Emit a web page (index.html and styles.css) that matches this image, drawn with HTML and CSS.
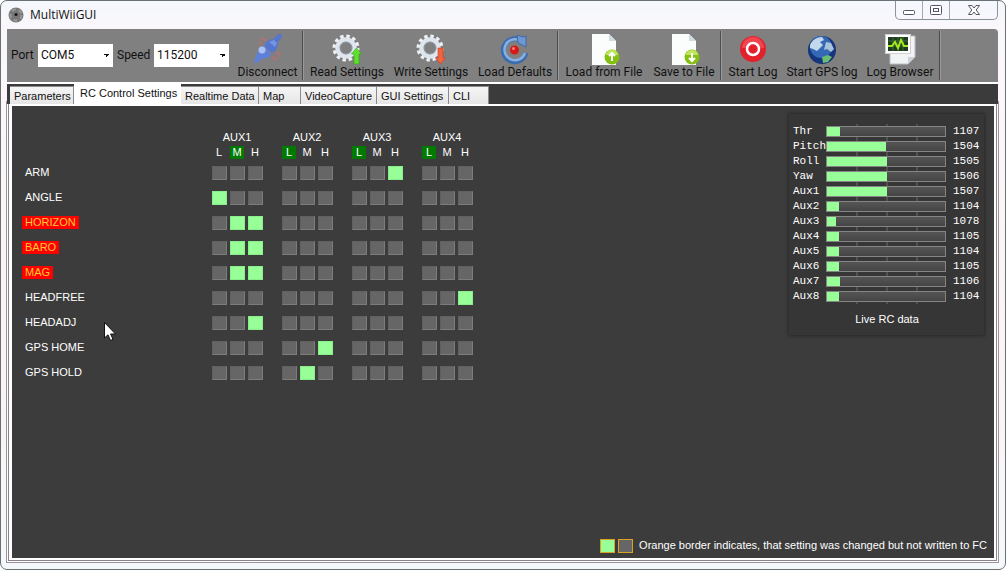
FILE: index.html
```html
<!DOCTYPE html>
<html lang="en">
<head>
<meta charset="utf-8">
<title>MultiWiiGUI</title>
<link rel="stylesheet" href="styles.css">
</head>
<body>
<div class="window">
  <header class="titlebar">
    <svg class="app-icon" viewBox="0 0 16 16"><circle cx="8" cy="8" r="7.500" fill="#777"/><circle cx="8" cy="8" r="5.500" fill="none" stroke="#999" stroke-width="2" stroke-dasharray="4 3"/><circle cx="8" cy="8" r="3" fill="#777"/><circle cx="8" cy="7.500" r="1.500" fill="#111"/></svg>
    <h1 class="title">MultiWiiGUI</h1>
    <div class="window-buttons">
      <button class="wb" aria-label="Minimize"><svg width="14" height="12" viewBox="0 0 14 12"><rect x="1.500" y="6.500" width="11" height="4" rx="1" fill="#fff" stroke="#556"/></svg></button>
      <button class="wb" aria-label="Maximize"><svg width="14" height="12" viewBox="0 0 14 12"><rect x="1.500" y="1.500" width="11" height="9" rx="1" fill="#fff" stroke="#556"/><rect x="4.500" y="4.500" width="5" height="3" fill="#fff" stroke="#556"/></svg></button>
      <button class="wb wb-close" aria-label="Close"><svg width="14" height="12" viewBox="0 0 14 12"><path d="M1.500 1.500h3.500l2 2.500 2-2.500h3.500L9.200 6l3.300 4.500H9L7 8l-2 2.500H1.500L4.800 6z" fill="#fff" stroke="#556"/></svg></button>
    </div>
  </header>

  <div class="toolbar" role="toolbar">
    <label class="field-label" for="port">Port</label>
    <select class="combo" id="port"><option>COM5</option></select>
    <label class="field-label" for="speed">Speed</label>
    <select class="combo" id="speed"><option>115200</option></select>
    <button class="tool w-69">
      <svg class="icon" viewBox="0 0 32 32"><g fill="none" stroke="#b07078" stroke-width="2" opacity=".8"><path d="M7 8l4-3 3 3M6 12l4-3M21 27l5-2M24 19l4 2-2 3M20 23l3 3"/></g><path d="M2 30c1-5 2-8 4-11 0-4 4-7 7-5l5 5c2 3 0 6-4 6-4 1-7 2-9 5z" fill="#6080d8"/><path d="M13 11c2-3 5-5 9-5l4-5 3 0 1 3-4 5c0 4-1 7-4 10-1 1-3 0-4-1l-5-4z" fill="#5475d0"/><path d="M17 9l5-2 3 3-2 4z" fill="#7595e2"/><circle cx="10" cy="17" r="3.500" fill="#a9c0f5"/></svg>
      <span>Disconnect</span></button>
    <span class="sep"></span>
    <button class="tool w-84">
      <svg class="icon" viewBox="0 0 32 32"><circle cx="15" cy="15" r="11.500" fill="none" stroke="#eef1f5" stroke-width="4" stroke-dasharray="3.300 2.721"/><circle cx="15" cy="15" r="8.500" fill="none" stroke="#dfe5ed" stroke-width="4.500"/><circle cx="15" cy="15" r="6" fill="none" stroke="#8e9cab"/><path d="M25.500 15l5 6h-2.500v10h-5V21h-2.500z" fill="#5fe02c" stroke="#2fa614" stroke-width=".6"/></svg>
      <span>Read Settings</span></button>
    <button class="tool w-84">
      <svg class="icon" viewBox="0 0 32 32"><circle cx="15" cy="15" r="11.500" fill="none" stroke="#eef1f5" stroke-width="4" stroke-dasharray="3.300 2.721"/><circle cx="15" cy="15" r="8.500" fill="none" stroke="#dfe5ed" stroke-width="4.500"/><circle cx="15" cy="15" r="6" fill="none" stroke="#8e9cab"/><path d="M25.500 31l5-6h-2.500V15h-5v10h-2.500z" fill="#f0653f" stroke="#d13b20" stroke-width=".6"/></svg>
      <span>Write Settings</span></button>
    <button class="tool w-84">
      <svg class="icon" viewBox="0 0 32 32"><path d="M27 20A11.500 11.500 0 1 1 21 7" fill="none" stroke="#3c6cad" stroke-width="5"/><path d="M26 20A10.500 10.500 0 1 1 20 7" fill="none" stroke="#88b0e2" stroke-width="2.500"/><path d="M18 2l6 2 3-1 0 11-8-4z" fill="#6c98d4" stroke="#3f69a4"/><circle cx="15.500" cy="17" r="4.500" fill="#d61818"/><circle cx="14.500" cy="15.500" r="1.500" fill="#ff8078"/></svg>
      <span>Load Defaults</span></button>
    <span class="sep"></span>
    <button class="tool w-88">
      <svg class="icon" viewBox="0 0 32 32"><path d="M4 1h17l7 7v24H4z" fill="#fbfcfc"/><path d="M21 1v7h7z" fill="#d4dbe0"/><circle cx="24" cy="24" r="7.500" fill="#84c010"/><path d="M18 22a6 5 0 0 1 12 0z" fill="#bfe65c"/><path d="M24 28v-7M21 23l3-3 3 3" fill="none" stroke="#fff" stroke-width="2"/></svg>
      <span>Load from File</span></button>
    <button class="tool w-72">
      <svg class="icon" viewBox="0 0 32 32"><path d="M4 1h17l7 7v24H4z" fill="#fbfcfc"/><path d="M21 1v7h7z" fill="#d4dbe0"/><circle cx="24" cy="24" r="7.500" fill="#84c010"/><path d="M18 22a6 5 0 0 1 12 0z" fill="#bfe65c"/><path d="M24 20v7M21 25l3 3 3-3" fill="none" stroke="#fff" stroke-width="2"/></svg>
      <span>Save to File</span></button>
    <span class="sep"></span>
    <button class="tool w-60">
      <svg class="icon" viewBox="0 0 32 32"><circle cx="16" cy="16" r="13" fill="#e3212d"/><path d="M5 15a11 11 0 0 1 22 0z" fill="#f0444e"/><circle cx="16" cy="16" r="6" fill="#e3212d" stroke="#fff" stroke-width="2.500"/></svg>
      <span>Start Log</span></button>
    <button class="tool w-78">
      <svg class="icon" viewBox="0 0 32 32"><circle cx="16" cy="17" r="14" fill="#16357c"/><circle cx="15" cy="14" r="11" fill="#3568b5"/><path d="M4 12c2-5 7-8 12-8l2 3-4 2 3 3-4 4-2 2-4-2-3-1z" fill="#c3d8ec"/><path d="M20 9l5 1 3 6-3 3-4-3-3 1z" fill="#a9c3da"/><path d="M16 24l6-2 4 2-4 5-5 1z" fill="#69bd71"/></svg>
      <span>Start GPS log</span></button>
    <button class="tool w-78">
      <svg class="icon" viewBox="0 0 32 32"><path d="M6 3h25v21l-7 7H6z" fill="#f2f3f5" stroke="#b9bdc3"/><path d="M24 31v-7h7z" fill="#cdd1d8"/><rect x="1.500" y="1.500" width="25" height="19" fill="#fff" stroke="#d0d0d0"/><rect x="4" y="4" width="20" height="14" fill="#1d3b1d"/><path d="M4 8h20M4 13h20M9 4v14M14 4v14M19 4v14" stroke="#3d6a3a" fill="none"/><path d="M4 13h4l3-4 3 6 3-8 3 6h4" fill="none" stroke="#a2e821" stroke-width="2"/></svg>
      <span>Log Browser</span></button>
    <span class="sep"></span>
  </div>

  <nav class="tabs" role="tablist">
    <button class="tab t-64" role="tab">Parameters</button>
    <button class="tab tab-active" role="tab" aria-selected="true">RC Control Settings</button>
    <button class="tab t-78" role="tab">Realtime Data</button>
    <button class="tab t-42" role="tab">Map</button>
    <button class="tab t-76" role="tab">VideoCapture</button>
    <button class="tab t-72" role="tab">GUI Settings</button>
    <button class="tab t-40" role="tab">CLI</button>
  </nav>

  <main class="page">
    <div class="columns">
      <table class="modes">
        <thead>
          <tr class="aux-row"><td></td><th colspan="3">AUX1</th><td></td><th colspan="3">AUX2</th><td></td><th colspan="3">AUX3</th><td></td><th colspan="3">AUX4</th></tr>
          <tr class="pos-row"><td class="name-col"></td><th>L</th><th><span class="on">M</span></th><th>H</th><td class="gap"></td><th><span class="on">L</span></th><th>M</th><th>H</th><td class="gap"></td><th><span class="on">L</span></th><th>M</th><th>H</th><td class="gap"></td><th><span class="on">L</span></th><th>M</th><th>H</th></tr>
        </thead>
        <tbody id="modes"></tbody>
      </table>
      <section class="live">
        <div class="channels" id="channels"></div>
        <h2 class="live-title">Live RC data</h2>
      </section>
    </div>
    <footer class="legend">
      <span class="swatch swatch-on"></span><span class="swatch"></span>
      <span class="legend-text">Orange border indicates, that setting was changed but not written to FC</span>
    </footer>
  </main>
  <svg class="cursor" width="12" height="19" viewBox="0 0 12 19"><path d="M.5.500v15.500l3.500-3.200 2.500 5.700 2.500-1.200-2.400-5.300h4.900z" fill="#fff" stroke="#111"/></svg>
</div>
<script src="app.js"></script>
</body>
</html>
```
FILE: styles.css
```css
* { box-sizing: border-box; }
body {
  margin: 0;
  font: 11px/15px "Liberation Sans", Arial, sans-serif;
  background: #fff;
}
button { font: inherit; border: 0; padding: 0; margin: 0; background: none; color: inherit; }
.window {
  position: relative;
  display: flex;
  flex-direction: column;
  min-height: 100vh;
  padding: 0 7px 9px 6px;
  border: 1px solid #6b7070;
  border-radius: 7px;
  background: linear-gradient(#f4f7fd, #faf7fb 30px, #fbf3f5 60%, #f5f8fa);
}
.titlebar { display: flex; align-items: center; height: 28px; padding-left: 1px; }
.app-icon { width: 16px; height: 16px; }
.title { flex: 1; margin: 0 0 0 6px; font: 12px/16px "Open Sans", sans-serif; color: #111; }
.window-buttons {
  display: flex;
  align-self: flex-start;
  height: 19px;
  border: 1px solid #8b919b;
  border-top: 0;
  border-radius: 0 0 5px 5px;
}
.wb { display: flex; align-items: center; justify-content: center; width: 27px; border-right: 1px solid #a4a9b2; }
.wb-close { width: 47px; border-right: 0; }

.toolbar {
  position: relative;
  z-index: 1;
  display: flex;
  align-items: center;
  height: 55px;
  padding-left: 4px;
  border-bottom: 2px solid #fff;
  border-radius: 0 4px 0 0;
  background: #808080;
  font: 12px/15px Roboto, "Open Sans", sans-serif;
  color: #111;
}
.field-label { width: 27px; }
.combo + .field-label { width: 37px; }
.combo {
  width: 75px;
  height: 23px;
  margin-right: 4px;
  padding: 0 3px;
  border: 0;
  border-radius: 0;
  appearance: none;
  font: inherit;
  color: #111;
  background-color: #fff;
  background-image: linear-gradient(45deg, transparent 50%, #111 50%), linear-gradient(315deg, transparent 50%, #111 50%);
  background-position: right 6px center, right 3px center;
  background-size: 3px 3px;
  background-repeat: no-repeat;
}
.tool { display: flex; flex-direction: column; align-items: center; flex: none; padding-top: 2px; white-space: nowrap; }
.icon { width: 32px; height: 32px; }
.sep { flex: none; width: 2px; height: 49px; margin-right: 1px; background: #4d4d4d; border-right: 1px solid #999; }
.w-60 { width: 60px; }
.w-69 { width: 69px; }
.w-72 { width: 72px; }
.w-78 { width: 78px; }
.w-84 { width: 84px; }
.w-88 { width: 88px; }

.tabs { position: relative; z-index: 1; display: flex; align-items: flex-end; height: 20px; padding-left: 3px; background: #3b3b3b; }
.tab {
  height: 18px;
  padding: 1px 4px 0;
  text-align: left;
  white-space: nowrap;
  color: #111;
  border: 1px solid #8b8b8b;
  border-width: 1px 1px 0 0;
  background: linear-gradient(#f5f5f5, #e6e6e6);
}
.tab-active { width: 107px; height: 20px; padding: 0 6px 2px; background: #fff; border-color: #fff; }
.t-40 { width: 40px; }
.t-42 { width: 42px; }
.t-64 { width: 64px; }
.t-72 { width: 72px; }
.t-76 { width: 76px; }
.t-78 { width: 78px; }

.page {
  flex: 1;
  display: flex;
  flex-direction: column;
  margin: 0 2px;
  border: solid #fff;
  border-width: 2px 2px 2px 3px;
  background: #3c3c3c;
  color: #fff;
  outline: 1px solid #8a8488;
  box-shadow: 0 0 0 2px #fff, 0 0 0 3px #99959a;
}
.columns { display: flex; justify-content: space-between; flex: 1; padding-right: 10px; }

.modes {
  align-self: flex-start;
  margin-top: 24px;
  border-collapse: collapse;
  font: 11px/13px "Liberation Sans", Arial, sans-serif;
}
.modes td, .modes th { padding: 0; font-weight: normal; text-align: center; }
.aux-row, .pos-row { height: 15px; }
.pos-row th { min-width: 18px; width: 18px; }
.pos-row .gap { min-width: 16px; width: 16px; }
.pos-row .name-col { min-width: 198px; width: 198px; }
.on { display: inline-block; width: 14px; background: #007a00; }
.mode-row { height: 25px; }
.modes .mode-name { padding-left: 10px; text-align: left; }
.mode-name span { display: inline-block; padding: 0 3px; }
.mode-name .alert { background: #f00; color: #ffc830; }
.box {
  display: block;
  appearance: none;
  width: 15px;
  height: 14px;
  margin: 0 auto;
  background: #666;
  border: 1px solid #606060;
  border-right-color: #7c7c7c;
  border-bottom-color: #7c7c7c;
}
.box:checked { background: #98ff98; border-color: #8aef8a; }

.live {
  align-self: flex-start;
  width: 195px;
  margin-top: 8px;
  padding: 10px 3px 8px 4px;
  background: #363636;
  box-shadow: 0 0 3px 1px #292929;
}
.channels {
  font: 11px/15px "Liberation Mono", monospace;
  background:
    linear-gradient(#505050, #505050) 63px 0 / 2px 100% no-repeat,
    linear-gradient(#505050, #505050) 93px 0 / 2px 100% no-repeat,
    linear-gradient(#505050, #505050) 123px 0 / 2px 100% no-repeat;
}
.channel { display: grid; grid-template-columns: 33px 120px 1fr; align-items: center; height: 15px; }
.bar { height: 11px; border: 1px solid #858585; background: linear-gradient(#555, #454545); }
.fill { height: 9px; background: #98ff98; }
.value { padding-left: 7px; }
.live-title { margin: 8px 0 0; font: 11px/15px "Liberation Sans", Arial, sans-serif; text-align: center; }

.legend { display: flex; align-items: center; justify-content: flex-end; gap: 3px; padding: 0 7px 5px; }
.swatch { width: 15px; height: 14px; border: 1px solid #d9a520; background: #666; }
.swatch-on { background: #98ff98; }
.legend-text { margin-left: 3px; }
.cursor { position: absolute; left: 103px; top: 321px; }
```
FILE: app.js
```js
// Each mode lists its active AUX positions, three (low, mid, high) per channel.
const modes = [
  ["ARM", "000000001000", false],
  ["ANGLE", "100000000000", false],
  ["HORIZON", "011000000000", true],
  ["BARO", "011000000000", true],
  ["MAG", "011000000000", true],
  ["HEADFREE", "000000000001", false],
  ["HEADADJ", "001000000000", false],
  ["GPS HOME", "000001000000", false],
  ["GPS HOLD", "000010000000", false]
];
const channels = [
  ["Thr", 1107], ["Pitch", 1504], ["Roll", 1505], ["Yaw", 1506],
  ["Aux1", 1507], ["Aux2", 1104], ["Aux3", 1078], ["Aux4", 1105],
  ["Aux5", 1104], ["Aux6", 1105], ["Aux7", 1106], ["Aux8", 1104]
];

document.getElementById("modes").innerHTML = modes.map(([name, bits, alert]) =>
  `<tr class="mode-row"><th class="mode-name" scope="row"><span class="${alert ? "alert" : ""}">${name}</span></th>` +
  [...bits].map((bit, i) =>
    `${i && i % 3 === 0 ? "<td></td>" : ""}<td><input class="box" type="checkbox" aria-label="${name} AUX${Math.floor(i / 3) + 1} ${"LMH"[i % 3]}"${bit === "1" ? " checked" : ""}></td>`
  ).join("") + "</tr>").join("");

// Bars span the 1000-2000 microsecond pulse range.
document.getElementById("channels").innerHTML = channels.map(([name, value]) =>
  `<div class="channel"><span>${name}</span><div class="bar"><div class="fill" style="width:${(value - 1000) / 10}%"></div></div><span class="value">${value}</span></div>`
).join("");
```
